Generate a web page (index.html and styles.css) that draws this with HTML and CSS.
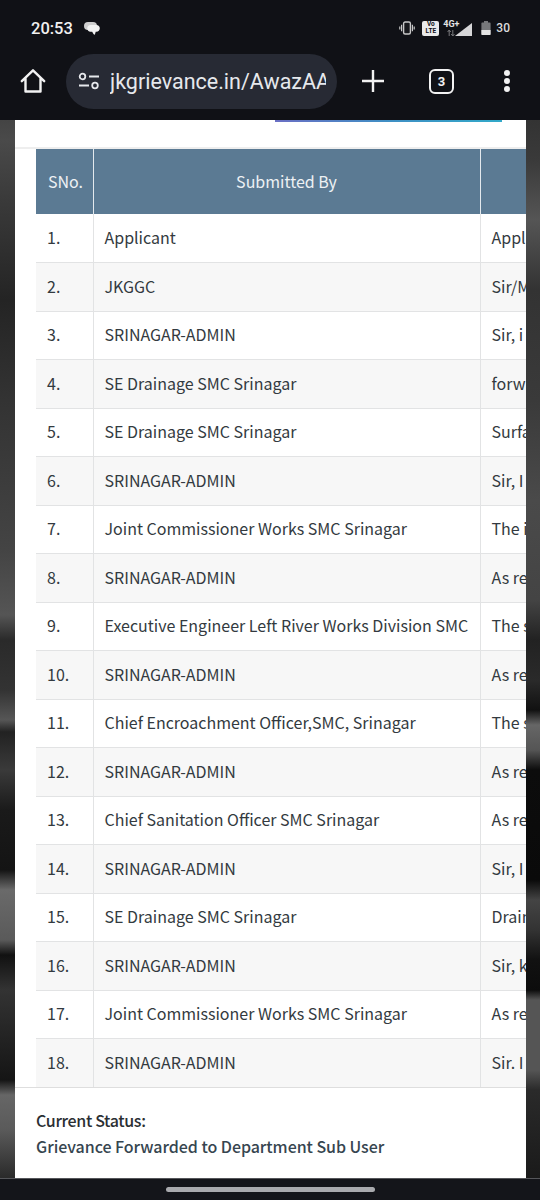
FILE: index.html
```html
<!DOCTYPE html>
<html lang="en">
<head>
    <meta charset="UTF-8">
    <meta name="viewport" content="width=device-width, initial-scale=1.0">
    <title>Grievance Status</title>
    <link rel="stylesheet" href="styles.css">
</head>
<body>
    <div class="top-bar">
        <div class="status-bar">
            <span class="clock">20:53</span>
            <svg class="chat-icon" width="16" height="15" viewBox="0 0 16 15">
                <rect x="0" y="1" width="13" height="8" rx="4" fill="#cfcfcf"/>
                <path d="M6.500 4h6c1.900 0 3.300 1.400 3.300 3.300s-1.400 3.500-3.300 3.500h-.8c-.2 1.200-.6 2.300-1.300 3.200-.9-.9-1.700-2-2.200-3.200H6.500c-1.900 0-3.300-1.600-3.300-3.500S4.600 4 6.500 4z" fill="#f2f2f2"/>
            </svg>
            <div class="status-icons">
                <svg width="16" height="14" viewBox="0 0 16 14">
                    <rect x="4.600" y="1" width="6.800" height="12" rx="1.500" fill="#17181c" stroke="#c8c8c8" stroke-width="1.400"/>
                    <path d="M2.600 3.800v6.400M.8 5.400v3.200M13.400 3.800v6.400M15.200 5.400v3.200" stroke="#c8c8c8" stroke-width="1.200"/>
                </svg>
                <span class="volte">Vo<br>LTE</span>
                <div class="network">
                    <span class="network-label">4G+</span>
                    <svg class="network-arrows" width="8" height="6" viewBox="0 0 8 6">
                        <path d="M2.200 0v6M.6 2 2.200 0l1.600 2M5.800 0v6M4.200 4l1.600 2 1.600-2" fill="none" stroke="#77787b" stroke-width="1"/>
                    </svg>
                </div>
                <svg class="signal" width="17" height="13" viewBox="0 0 17 13">
                    <path d="M17 0v13H0z" fill="#d6d6d8"/>
                </svg>
                <svg class="battery" width="10" height="14" viewBox="0 0 10 14">
                    <path d="M3 0h4v1.500h1.600c.6 0 1 .4 1 1V13c0 .6-.4 1-1 1H1.400c-.6 0-1-.4-1-1V2.500c0-.6.4-1 1-1H3z" fill="#77787b"/>
                    <path d="M.4 9h9.200v4c0 .6-.4 1-1 1H1.400c-.6 0-1-.4-1-1z" fill="#e4e4e4"/>
                </svg>
                <span class="battery-level">30</span>
            </div>
        </div>
        <div class="browser-bar">
            <svg class="home-icon" width="26" height="26" viewBox="0 0 26 26">
                <path d="M1.800 13.200 13 2.300l11.200 10.900M5.500 10.500v13h15v-13" fill="none" stroke="#f2f2f2" stroke-width="2.400" stroke-linejoin="round" stroke-linecap="round"/>
            </svg>
            <div class="url-box">
                <svg class="tune-icon" width="22" height="18" viewBox="0 0 22 18">
                    <circle cx="4.500" cy="4.500" r="2.800" fill="none" stroke="#e6e8ec" stroke-width="1.800"/>
                    <path d="M11 4.500h10M1 13.500h10" stroke="#e6e8ec" stroke-width="1.800"/>
                    <circle cx="17" cy="13.500" r="2.800" fill="none" stroke="#e6e8ec" stroke-width="1.800"/>
                </svg>
                <span class="url-text">jkgrievance.in/AwazAAction</span>
            </div>
            <svg class="plus-icon" width="24" height="24" viewBox="0 0 24 24">
                <path d="M12 1v22M1 12h22" stroke="#f2f2f2" stroke-width="2.400"/>
            </svg>
            <span class="tab-count">3</span>
            <div class="menu-dots"><i></i><i></i><i></i></div>
        </div>
    </div>

    <div class="page">
        <div class="card">
            <div class="table-wrap">
                <div class="card-top"><div class="accent"></div></div>
                <table class="history">
                    <thead>
                        <tr><th class="col-no">SNo.</th><th class="col-by">Submitted By</th><th class="col-remark"></th></tr>
                    </thead>
                    <tbody>
                        <tr><td>1.</td><td>Applicant</td><td>Applicant has submitted</td></tr>
                        <tr><td>2.</td><td>JKGGC</td><td>Sir/Madam</td></tr>
                        <tr><td>3.</td><td>SRINAGAR-ADMIN</td><td>Sir, i request</td></tr>
                        <tr><td>4.</td><td>SE Drainage SMC Srinagar</td><td>forwarded</td></tr>
                        <tr><td>5.</td><td>SE Drainage SMC Srinagar</td><td>Surface drain</td></tr>
                        <tr><td>6.</td><td>SRINAGAR-ADMIN</td><td>Sir, I request</td></tr>
                        <tr><td>7.</td><td>Joint Commissioner Works SMC Srinagar</td><td>The issue</td></tr>
                        <tr><td>8.</td><td>SRINAGAR-ADMIN</td><td>As requested</td></tr>
                        <tr><td>9.</td><td>Executive Engineer Left River Works Division SMC</td><td>The said</td></tr>
                        <tr><td>10.</td><td>SRINAGAR-ADMIN</td><td>As requested</td></tr>
                        <tr><td>11.</td><td>Chief Encroachment Officer,SMC, Srinagar</td><td>The said</td></tr>
                        <tr><td>12.</td><td>SRINAGAR-ADMIN</td><td>As requested</td></tr>
                        <tr><td>13.</td><td>Chief Sanitation Officer SMC Srinagar</td><td>As requested</td></tr>
                        <tr><td>14.</td><td>SRINAGAR-ADMIN</td><td>Sir, I request</td></tr>
                        <tr><td>15.</td><td>SE Drainage SMC Srinagar</td><td>Drain</td></tr>
                        <tr><td>16.</td><td>SRINAGAR-ADMIN</td><td>Sir, kindly</td></tr>
                        <tr><td>17.</td><td>Joint Commissioner Works SMC Srinagar</td><td>As requested</td></tr>
                        <tr><td>18.</td><td>SRINAGAR-ADMIN</td><td>Sir. I request</td></tr>
                    </tbody>
                </table>
            </div>
            <div class="status">
                <p class="status-label">Current Status:</p>
                <p class="status-value">Grievance Forwarded to Department Sub User</p>
            </div>
        </div>
    </div>

    <div class="nav-bar"><div class="nav-pill"></div></div>
</body>
</html>
```
FILE: styles.css
```css
* {
    box-sizing: border-box;
}

html, body {
    margin: 0;
    padding: 0;
}

body {
    width: 540px;
    height: 1200px;
    overflow: hidden;
    display: flex;
    flex-direction: column;
    font-family: "Noto Sans CJK SC", "Noto Sans", sans-serif;
    background-color: #14151a;
}

.top-bar {
    height: 120px;
    flex-shrink: 0;
    background-color: #101116;
}

.status-bar {
    height: 53px;
    display: flex;
    align-items: center;
    padding: 3px 30px 0 31px;
    color: #f0f0f0;
}

.clock {
    font-family: Roboto, sans-serif;
    font-size: 16.500px;
    font-weight: 500;
}

.chat-icon {
    margin-left: 11px;
}

.status-icons {
    margin-left: auto;
    display: flex;
    align-items: center;
}

.volte {
    width: 17px;
    height: 15px;
    margin-left: 7px;
    background-color: #eaeaea;
    border-radius: 2px;
    color: #101116;
    font-family: Roboto, sans-serif;
    font-size: 6.500px;
    font-weight: 700;
    line-height: 7px;
    text-align: center;
}

.network {
    width: 18px;
    margin-left: 3px;
    display: flex;
    flex-direction: column;
    align-items: center;
}

.network-label {
    font-family: Roboto, sans-serif;
    font-size: 9px;
    font-weight: 700;
    line-height: 9px;
    color: #e4e4e4;
}

.network-arrows {
    margin-top: 1px;
}

.signal {
    margin-left: -5px;
    margin-top: 2px;
}

.battery {
    margin-left: 9px;
}

.battery-level {
    margin-left: 5px;
    font-family: Roboto, sans-serif;
    font-size: 12px;
    font-weight: 500;
    color: #dcdcdc;
}

.browser-bar {
    height: 67px;
    display: flex;
    align-items: center;
    padding: 0 0 11px 20px;
}

.url-box {
    width: 271px;
    height: 55px;
    margin-left: 20px;
    padding: 0 0 0 12px;
    display: flex;
    align-items: center;
    background-color: #272a34;
    border-radius: 28px;
    overflow: hidden;
}

.tune-icon {
    flex-shrink: 0;
}

.url-text {
    width: 216px;
    margin-left: 10px;
    overflow: hidden;
    white-space: nowrap;
    font-family: Roboto, sans-serif;
    font-size: 21.500px;
    color: #e6e8ec;
}

.plus-icon {
    margin-left: 24px;
}

.tab-count {
    width: 25px;
    height: 25px;
    margin-left: 44px;
    display: flex;
    align-items: center;
    justify-content: center;
    border: 2.400px solid #f2f2f2;
    border-radius: 6px;
    color: #f2f2f2;
    font-family: Roboto, sans-serif;
    font-size: 13px;
    font-weight: 700;
}

.menu-dots {
    margin-left: 50px;
    display: flex;
    flex-direction: column;
    gap: 2px;
}

.menu-dots i {
    width: 6px;
    height: 6px;
    border-radius: 50%;
    background-color: #f2f2f2;
}

.page {
    flex: 1;
    padding: 0 14px 0 15px;
    background-color: #222;
    background-image:
        linear-gradient(to bottom, #444 0, #4a4a4a 20px, #3a3a3a 80px, #242424 180px, #333 280px, #444 430px, #555 495px, #2a2a2a 520px, #333 570px, #565656 600px, #222 612px, #3a3a3a 650px, #1a1a1a 690px, #141414 750px, #6a6a6a 770px, #5a5a5a 820px, #111 835px, #333 870px, #151515 960px, #666 975px, #5a5a5a 1010px, #2a2a2a 1058px),
        linear-gradient(to bottom, #333 0, #3a3a3a 40px, #555 100px, #333 170px, #3a3a3a 280px, #4a4a4a 380px, #444 480px, #222 520px, #2a2a2a 560px, #111 590px, #666 605px, #555 630px, #0c0c0c 650px, #0a0a0a 760px, #444 780px, #333 810px, #111 840px, #0c0c0c 870px, #555 880px, #555 950px, #2a2a2a 970px, #1a1a1a 1058px);
    background-size: 50% 100%;
    background-position: left top, right top;
    background-repeat: no-repeat;
}

.card {
    height: 100%;
    background-color: #fff;
    display: flex;
    flex-direction: column;
}

.table-wrap {
    overflow: hidden;
}

.card-top {
    height: 29px;
    border-bottom: 2px solid #eeeeee;
    padding-left: 260px;
}

.accent {
    width: 227px;
    height: 1.500px;
    background: linear-gradient(to right, #6a6fc4, #3f8fc4, #32a9c9);
}

.history {
    width: 600px;
    margin-left: 21px;
    table-layout: fixed;
    border-collapse: collapse;
    font-size: 16px;
    color: #333a40;
}

.col-no {
    width: 57px;
}

.col-by {
    width: 387px;
}

.history th {
    height: 65px;
    padding: 0 12px 2px;
    background-color: #5b7a93;
    border-right: 1px solid #e4e9ed;
    color: #edf1f4;
    font-weight: 400;
    text-align: center;
}

.history th:first-child {
    text-align: left;
}

.history td {
    height: 48.500px;
    padding: 0 11px 2px;
    border-top: 1px solid #e2e3e4;
    border-right: 1px solid #e2e3e4;
    white-space: nowrap;
    overflow: hidden;
}

.history tbody tr:first-child td {
    border-top: none;
}

.history tbody tr:nth-child(even) {
    background-color: #f7f7f7;
}

.status {
    border-top: 1px solid #dedede;
    padding: 19px 21px 0;
}

.status p {
    margin: 0;
    font-size: 16px;
    line-height: 26px;
}

.status-label {
    font-weight: 500;
    letter-spacing: -0.35px;
    color: #2b2f33;
}

.status-value {
    font-weight: 500;
    letter-spacing: -0.05px;
    color: #36454f;
}

.nav-bar {
    height: 22px;
    flex-shrink: 0;
    display: flex;
    justify-content: center;
    align-items: center;
    background-color: #14151a;
    border-top: 1px solid #55565a;
}

.nav-pill {
    width: 209px;
    height: 5px;
    border-radius: 3px;
    background-color: #a9aaae;
}
```
